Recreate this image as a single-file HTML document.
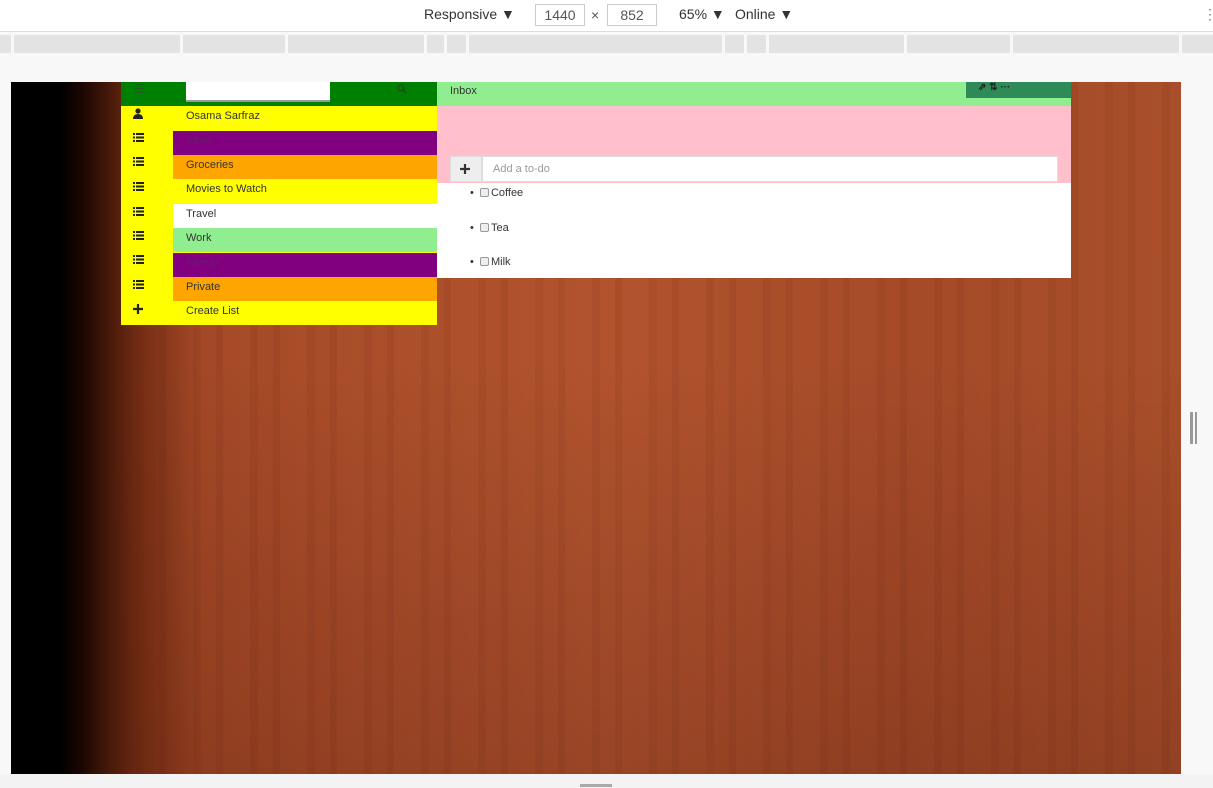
<!DOCTYPE html>
<html><head><style>
*{margin:0;padding:0;box-sizing:border-box}
body{width:1213px;height:788px;background:#f8f8f8;font-family:"Liberation Sans",sans-serif;position:relative;overflow:hidden;font-size:11px;color:#333}
.a{position:absolute}
.top{left:0;top:0;width:1213px;height:32px;background:#fff;border-bottom:1px solid #ddd;font-size:14px;color:#333}
.seg{position:absolute;top:35px;height:18px;background:#e3e3e3}
.wood{left:11px;top:82px;width:1170px;height:692px;
background:linear-gradient(90deg,#000 0,#000 50px,#1a0602 70px,#4a1a0a 100px,rgba(90,30,10,0.6) 130px,rgba(0,0,0,0) 190px),
linear-gradient(180deg,rgba(0,0,0,0) 40%,rgba(40,5,0,0.18) 100%),
repeating-linear-gradient(90deg,rgba(255,200,150,0.025) 0 11px,rgba(0,0,0,0.03) 11px 19px,rgba(255,200,150,0.015) 19px 34px,rgba(0,0,0,0.035) 34px 41px,rgba(255,200,150,0.02) 41px 57px),
linear-gradient(90deg,#9a4020 0,#a84a27 300px,#b0512c 600px,#a44826 900px,#a84c28 1170px);}
.row{position:absolute;left:173px;width:264px;height:24px;padding-left:13px;padding-top:2px;line-height:16px}
.cb{display:inline-block;width:9px;height:9px;border:1px solid #999;border-radius:2px;background:#eee;vertical-align:-1px;margin-right:2px}
</style></head><body>
<div class="a top">
<span class="a" style="left:424px;top:6px">Responsive ▼</span>
<span class="a" style="left:535px;top:4px;width:50px;height:22px;border:1px solid #ccc;text-align:center;line-height:20px;color:#555">1440</span>
<span class="a" style="left:591px;top:7px;color:#555">×</span>
<span class="a" style="left:607px;top:4px;width:50px;height:22px;border:1px solid #ccc;text-align:center;line-height:20px;color:#555">852</span>
<span class="a" style="left:679px;top:6px">65% ▼</span>
<span class="a" style="left:735px;top:6px">Online ▼</span>
<span class="a" style="left:1203px;top:6px;color:#777">⋮</span>
</div>
<div class="seg" style="left:0;width:11px"></div>
<div class="seg" style="left:14px;width:166px"></div>
<div class="seg" style="left:183px;width:102px"></div>
<div class="seg" style="left:288px;width:136px"></div>
<div class="seg" style="left:427px;width:17px"></div>
<div class="seg" style="left:447px;width:19px"></div>
<div class="seg" style="left:469px;width:253px"></div>
<div class="seg" style="left:725px;width:19px"></div>
<div class="seg" style="left:747px;width:19px"></div>
<div class="seg" style="left:769px;width:135px"></div>
<div class="seg" style="left:907px;width:103px"></div>
<div class="seg" style="left:1013px;width:166px"></div>
<div class="seg" style="left:1182px;width:31px"></div>
<div class="a wood"></div>
<div class="a" style="left:0;top:774px;width:1213px;height:14px;background:#f3f3f3"></div>
<div class="a" style="left:580px;top:784px;width:32px;height:3px;background:#aaa"></div>
<div class="a" style="left:1190px;top:412px;width:3px;height:32px;background:#999"></div>
<div class="a" style="left:1195px;top:412px;width:2px;height:32px;background:#999"></div>
<div class="a" style="left:121px;top:82px;width:316px;height:24px;background:#008000"></div>
<div class="a" style="left:134px;top:82px;color:#1f5a1f;font-size:12px">☰</div>
<div class="a" style="left:186px;top:82px;width:144px;height:20px;background:#fff;border-bottom:2px solid #999"></div>
<svg class="a" style="left:397px;top:84px" width="10" height="10"><circle cx="4" cy="4" r="3" fill="none" stroke="#1f4f1f" stroke-width="1.6"/><path d="M6 6l3 3" stroke="#1f4f1f" stroke-width="1.8"/></svg>
<div class="a" style="left:437px;top:82px;width:634px;height:24px;background:#90ee90;padding:3px 13px;color:#333">Inbox</div>
<div class="a" style="left:966px;top:82px;width:105px;height:16px;background:#2e8b57;color:#222;font-size:10px;padding:0 12px;font-weight:bold">⇗ ⇅ ···</div>
<div class="a" style="left:121px;top:106px;width:316px;height:219px;background:#ff0"></div>
<div class="row" style="top:106px">Osama Sarfraz</div>
<div class="row" style="top:131px;background:#800080;color:#6a1a6a">Inbox</div>
<div class="row" style="top:155px;background:#ffa500">Groceries</div>
<div class="row" style="top:179px">Movies to Watch</div>
<div class="row" style="top:204px;background:#fff">Travel</div>
<div class="row" style="top:228px;background:#90ee90">Work</div>
<div class="row" style="top:253px;background:#800080;color:#6a1a6a">Family</div>
<div class="row" style="top:277px;background:#ffa500">Private</div>
<div class="row" style="top:301px">Create List</div>
<svg class="a" style="left:133px;top:108px" width="10" height="11"><circle cx="5" cy="3" r="2.6" fill="#222"/><path d="M0 11Q0 6 5 6Q10 6 10 11Z" fill="#222"/></svg>
<svg class="a" style="left:133px;top:133px" width="11" height="9"><g fill="#222"><rect x="0" y="0" width="2" height="2"/><rect x="3" y="0" width="8" height="2"/><rect x="0" y="3.5" width="2" height="2"/><rect x="3" y="3.5" width="8" height="2"/><rect x="0" y="7" width="2" height="2"/><rect x="3" y="7" width="8" height="2"/></g></svg>
<svg class="a" style="left:133px;top:157px" width="11" height="9"><g fill="#222"><rect x="0" y="0" width="2" height="2"/><rect x="3" y="0" width="8" height="2"/><rect x="0" y="3.5" width="2" height="2"/><rect x="3" y="3.5" width="8" height="2"/><rect x="0" y="7" width="2" height="2"/><rect x="3" y="7" width="8" height="2"/></g></svg>
<svg class="a" style="left:133px;top:182px" width="11" height="9"><g fill="#222"><rect x="0" y="0" width="2" height="2"/><rect x="3" y="0" width="8" height="2"/><rect x="0" y="3.5" width="2" height="2"/><rect x="3" y="3.5" width="8" height="2"/><rect x="0" y="7" width="2" height="2"/><rect x="3" y="7" width="8" height="2"/></g></svg>
<svg class="a" style="left:133px;top:207px" width="11" height="9"><g fill="#222"><rect x="0" y="0" width="2" height="2"/><rect x="3" y="0" width="8" height="2"/><rect x="0" y="3.5" width="2" height="2"/><rect x="3" y="3.5" width="8" height="2"/><rect x="0" y="7" width="2" height="2"/><rect x="3" y="7" width="8" height="2"/></g></svg>
<svg class="a" style="left:133px;top:231px" width="11" height="9"><g fill="#222"><rect x="0" y="0" width="2" height="2"/><rect x="3" y="0" width="8" height="2"/><rect x="0" y="3.5" width="2" height="2"/><rect x="3" y="3.5" width="8" height="2"/><rect x="0" y="7" width="2" height="2"/><rect x="3" y="7" width="8" height="2"/></g></svg>
<svg class="a" style="left:133px;top:255px" width="11" height="9"><g fill="#222"><rect x="0" y="0" width="2" height="2"/><rect x="3" y="0" width="8" height="2"/><rect x="0" y="3.5" width="2" height="2"/><rect x="3" y="3.5" width="8" height="2"/><rect x="0" y="7" width="2" height="2"/><rect x="3" y="7" width="8" height="2"/></g></svg>
<svg class="a" style="left:133px;top:280px" width="11" height="9"><g fill="#222"><rect x="0" y="0" width="2" height="2"/><rect x="3" y="0" width="8" height="2"/><rect x="0" y="3.5" width="2" height="2"/><rect x="3" y="3.5" width="8" height="2"/><rect x="0" y="7" width="2" height="2"/><rect x="3" y="7" width="8" height="2"/></g></svg>
<svg class="a" style="left:133px;top:304px" width="10" height="10"><path d="M5 0V10M0 5H10" stroke="#222" stroke-width="2.2"/></svg>
<div class="a" style="left:437px;top:106px;width:634px;height:77px;background:#ffc0cb"></div>
<div class="a" style="left:450px;top:156px;width:32px;height:26px;background:#eee;border:1px solid #ddd"></div>
<svg class="a" style="left:460px;top:164px" width="10" height="10"><path d="M5 0V10M0 5H10" stroke="#333" stroke-width="2.2"/></svg>
<div class="a" style="left:482px;top:156px;width:576px;height:26px;background:#fff;border:1px solid #ddd;color:#999;padding:6px 10px">Add a to-do</div>
<div class="a" style="left:437px;top:183px;width:634px;height:95px;background:#fff"></div>
<div class="a" style="left:470px;top:187px">•&nbsp;&nbsp;<span class="cb"></span>Coffee</div>
<div class="a" style="left:470px;top:222px">•&nbsp;&nbsp;<span class="cb"></span>Tea</div>
<div class="a" style="left:470px;top:256px">•&nbsp;&nbsp;<span class="cb"></span>Milk</div>
</body></html>
